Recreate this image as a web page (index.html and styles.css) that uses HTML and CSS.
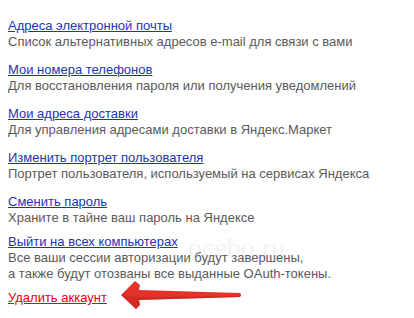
FILE: index.html
```html
<!DOCTYPE html>
<html lang="ru">
<head>
    <meta charset="UTF-8">
    <title>Управление аккаунтом</title>
    <link rel="stylesheet" href="styles.css">
</head>
<body>
    <ul class="settings">
        <li>
            <a href="#">Адреса электронной почты</a>
            <p>Список альтернативных адресов e-mail для связи с вами</p>
        </li>
        <li>
            <a href="#">Мои номера телефонов</a>
            <p>Для восстановления пароля или получения уведомлений</p>
        </li>
        <li>
            <a href="#">Мои адреса доставки</a>
            <p>Для управления адресами доставки в Яндекс.Маркет</p>
        </li>
        <li>
            <a href="#">Изменить портрет пользователя</a>
            <p>Портрет пользователя, используемый на сервисах Яндекса</p>
        </li>
        <li class="tight">
            <a href="#">Сменить пароль</a>
            <p>Храните в тайне ваш пароль на Яндексе</p>
        </li>
        <li class="tight">
            <a href="#">Выйти на всех компьютерах</a>
            <p>Все ваши сессии авторизации будут завершены,<br>а также будут отозваны все выданные OAuth-токены.</p>
        </li>
        <li class="delete">
            <a href="#">Удалить аккаунт</a>
            <!-- стрелка поверх скриншота -->
            <svg class="arrow" width="124" height="30" viewBox="0 0 124 30">
                <path d="M2 15 L16 1 L21 5 L20 10 L121 13 Q123 15 121 17 L20 20 L21 25 L17 29 Z" fill="#e4322b"/>
                <path d="M20 17 L121 16 L121 17 L20 20 L21 25 L17 29 L2 15 Z" fill="#c22420" opacity="0.6"/>
            </svg>
        </li>
    </ul>
    <div class="watermark">ocebo.ru</div>
</body>
</html>
```
FILE: styles.css
```css
body {
    font-family: 'Liberation Sans', Arial, sans-serif;
    font-size: 13px;
    line-height: 16px;
    margin: 8px;
    background: #fff;
}

.settings {
    list-style: none;
    margin: 0;
    padding: 10px 0 0 0;
}

.settings li {
    margin-bottom: 12px;
}

.settings li.tight {
    margin-bottom: 8px;
}

.settings a {
    color: #2135b0;
    text-decoration: underline;
}

.settings p {
    margin: 0;
    color: #5a5a5a;
}

.settings .delete {
    position: relative;
}

.settings .delete a {
    color: #e5000f;
}

.arrow {
    position: absolute;
    left: 111px;
    top: -10px;
}

.watermark {
    position: absolute;
    left: 188px;
    top: 236px;
    font-family: 'Liberation Serif', serif;
    font-size: 28px;
    line-height: 24px;
    color: #f3f3f3;
    z-index: -1;
}
```
